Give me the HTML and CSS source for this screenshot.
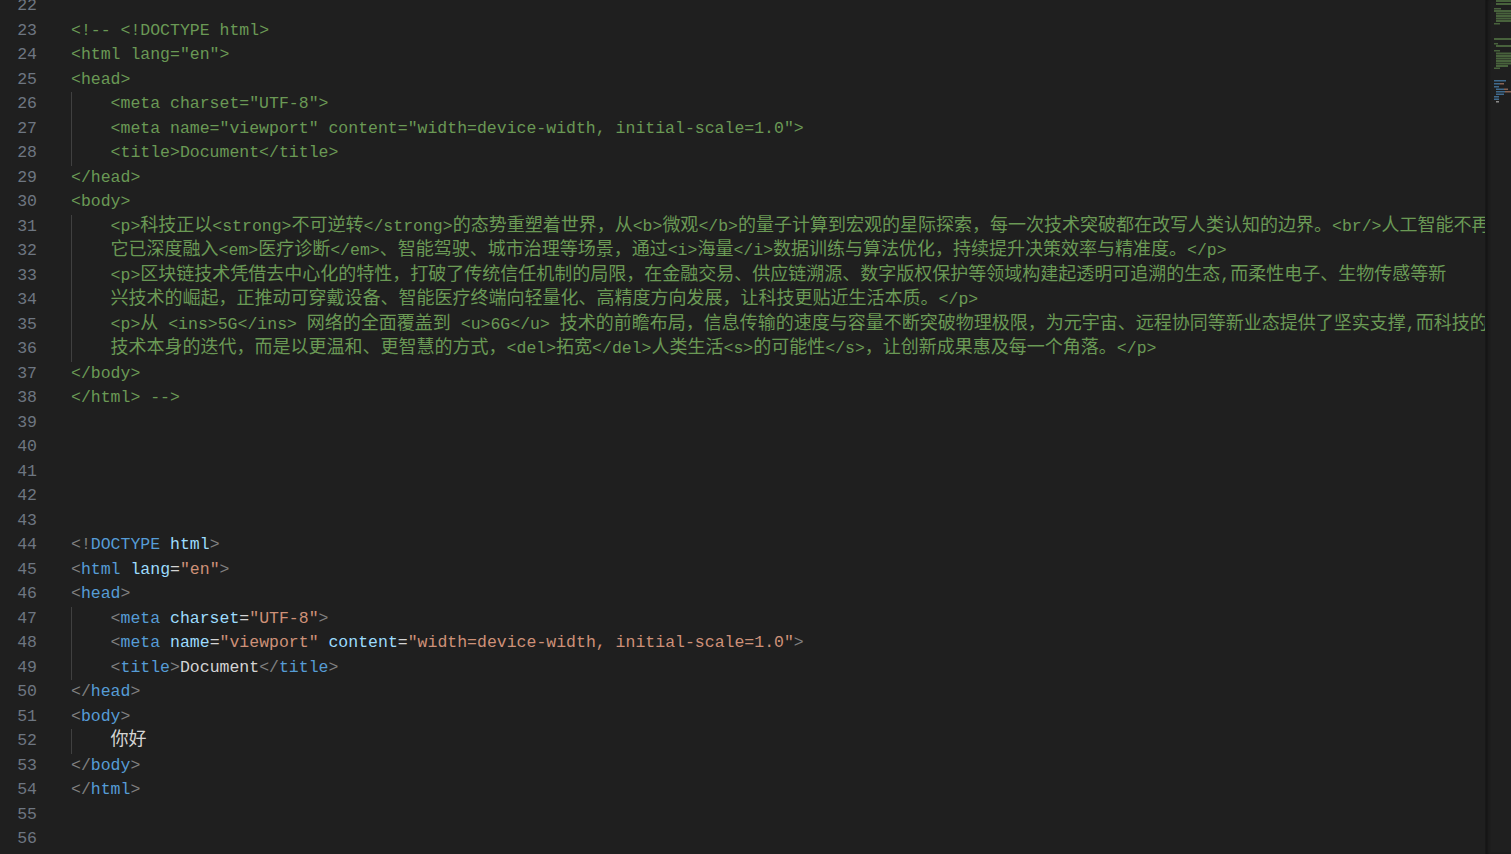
FILE: index.html
```html
<!DOCTYPE html>
<html lang="zh">
<head>
<meta charset="UTF-8">
<title>Editor</title>
<link rel="stylesheet" href="styles.css">
</head>
<body>
<div class="editor">
  <div class="lines">
    <div class="scroll">
      <div class="row"><span class="ln">22</span><span class="src"></span></div>
      <div class="row"><span class="ln">23</span><span class="src c">&lt;!-- &lt;!DOCTYPE html&gt;</span></div>
      <div class="row"><span class="ln">24</span><span class="src c">&lt;html lang="en"&gt;</span></div>
      <div class="row"><span class="ln">25</span><span class="src c">&lt;head&gt;</span></div>
      <div class="row"><span class="ln">26</span><span class="src c"><span class="ind"></span>&lt;meta charset="UTF-8"&gt;</span></div>
      <div class="row"><span class="ln">27</span><span class="src c"><span class="ind"></span>&lt;meta name="viewport" content="width=device-width, initial-scale=1.0"&gt;</span></div>
      <div class="row"><span class="ln">28</span><span class="src c"><span class="ind"></span>&lt;title&gt;Document&lt;/title&gt;</span></div>
      <div class="row"><span class="ln">29</span><span class="src c">&lt;/head&gt;</span></div>
      <div class="row"><span class="ln">30</span><span class="src c">&lt;body&gt;</span></div>
      <div class="row"><span class="ln">31</span><span class="src c"><span class="ind"></span>&lt;p&gt;<span class="k">科技正以</span>&lt;strong&gt;<span class="k">不可逆转</span>&lt;/strong&gt;<span class="k">的态势重塑着世界，从</span>&lt;b&gt;<span class="k">微观</span>&lt;/b&gt;<span class="k">的量子计算到宏观的星际探索，每一次技术突破都在改写人类认知的边界。</span>&lt;br/&gt;<span class="k">人工智能不再是实验室里的概念，</span></span></div>
      <div class="row"><span class="ln">32</span><span class="src c"><span class="ind"></span><span class="k">它已深度融入</span>&lt;em&gt;<span class="k">医疗诊断</span>&lt;/em&gt;<span class="k">、智能驾驶、城市治理等场景，通过</span>&lt;i&gt;<span class="k">海量</span>&lt;/i&gt;<span class="k">数据训练与算法优化，持续提升决策效率与精准度。</span>&lt;/p&gt;</span></div>
      <div class="row"><span class="ln">33</span><span class="src c"><span class="ind"></span>&lt;p&gt;<span class="k">区块链技术凭借去中心化的特性，打破了传统信任机制的局限，在金融交易、供应链溯源、数字版权保护等领域构建起透明可追溯的生态</span>,<span class="k">而柔性电子、生物传感等新</span></span></div>
      <div class="row"><span class="ln">34</span><span class="src c"><span class="ind"></span><span class="k">兴技术的崛起，正推动可穿戴设备、智能医疗终端向轻量化、高精度方向发展，让科技更贴近生活本质。</span>&lt;/p&gt;</span></div>
      <div class="row"><span class="ln">35</span><span class="src c"><span class="ind"></span>&lt;p&gt;<span class="k">从</span> &lt;ins&gt;5G&lt;/ins&gt; <span class="k">网络的全面覆盖到</span> &lt;u&gt;6G&lt;/u&gt; <span class="k">技术的前瞻布局，信息传输的速度与容量不断突破物理极限，为元宇宙、远程协同等新业态提供了坚实支撑</span>,<span class="k">而科技的意义不仅在于</span></span></div>
      <div class="row"><span class="ln">36</span><span class="src c"><span class="ind"></span><span class="k">技术本身的迭代，而是以更温和、更智慧的方式，</span>&lt;del&gt;<span class="k">拓宽</span>&lt;/del&gt;<span class="k">人类生活</span>&lt;s&gt;<span class="k">的可能性</span>&lt;/s&gt;<span class="k">，让创新成果惠及每一个角落。</span>&lt;/p&gt;</span></div>
      <div class="row"><span class="ln">37</span><span class="src c">&lt;/body&gt;</span></div>
      <div class="row"><span class="ln">38</span><span class="src c">&lt;/html&gt; --&gt;</span></div>
      <div class="row"><span class="ln">39</span><span class="src"></span></div>
      <div class="row"><span class="ln">40</span><span class="src"></span></div>
      <div class="row"><span class="ln">41</span><span class="src"></span></div>
      <div class="row"><span class="ln">42</span><span class="src"></span></div>
      <div class="row"><span class="ln">43</span><span class="src"></span></div>
      <div class="row"><span class="ln">44</span><span class="src"><span class="p">&lt;!</span><span class="t">DOCTYPE</span> <span class="a">html</span><span class="p">&gt;</span></span></div>
      <div class="row"><span class="ln">45</span><span class="src"><span class="p">&lt;</span><span class="t">html</span> <span class="a">lang</span><span class="x">=</span><span class="v">"en"</span><span class="p">&gt;</span></span></div>
      <div class="row"><span class="ln">46</span><span class="src"><span class="p">&lt;</span><span class="t">head</span><span class="p">&gt;</span></span></div>
      <div class="row"><span class="ln">47</span><span class="src"><span class="ind"></span><span class="p">&lt;</span><span class="t">meta</span> <span class="a">charset</span><span class="x">=</span><span class="v">"UTF-8"</span><span class="p">&gt;</span></span></div>
      <div class="row"><span class="ln">48</span><span class="src"><span class="ind"></span><span class="p">&lt;</span><span class="t">meta</span> <span class="a">name</span><span class="x">=</span><span class="v">"viewport"</span> <span class="a">content</span><span class="x">=</span><span class="v">"width=device-width, initial-scale=1.0"</span><span class="p">&gt;</span></span></div>
      <div class="row"><span class="ln">49</span><span class="src"><span class="ind"></span><span class="p">&lt;</span><span class="t">title</span><span class="p">&gt;</span><span class="x">Document</span><span class="p">&lt;/</span><span class="t">title</span><span class="p">&gt;</span></span></div>
      <div class="row"><span class="ln">50</span><span class="src"><span class="p">&lt;/</span><span class="t">head</span><span class="p">&gt;</span></span></div>
      <div class="row"><span class="ln">51</span><span class="src"><span class="p">&lt;</span><span class="t">body</span><span class="p">&gt;</span></span></div>
      <div class="row"><span class="ln">52</span><span class="src"><span class="ind"></span><span class="x k">你好</span></span></div>
      <div class="row"><span class="ln">53</span><span class="src"><span class="p">&lt;/</span><span class="t">body</span><span class="p">&gt;</span></span></div>
      <div class="row"><span class="ln">54</span><span class="src"><span class="p">&lt;/</span><span class="t">html</span><span class="p">&gt;</span></span></div>
      <div class="row"><span class="ln">55</span><span class="src"></span></div>
      <div class="row"><span class="ln">56</span><span class="src"></span></div>
    </div>
  </div>
  <div class="minimap">
    <svg width="26" height="854" viewBox="0 0 26 854" xmlns="http://www.w3.org/2000/svg">
      <g fill="#6a9955" opacity="0.55">
        <rect x="10" y="0" width="16" height="2"/>
        <rect x="10" y="3" width="16" height="2"/>
        <rect x="8" y="8" width="7" height="1.5"/>
        <rect x="8" y="10" width="18" height="2"/>
        <rect x="10" y="12.5" width="16" height="2"/>
        <rect x="10" y="15" width="16" height="2"/>
        <rect x="10" y="17.5" width="16" height="2"/>
        <rect x="10" y="20" width="16" height="2"/>
        <rect x="8" y="23" width="6" height="1.5"/>
        <rect x="8" y="38" width="18" height="2"/>
        <rect x="8" y="43" width="4" height="1.5"/>
        <rect x="10" y="45" width="16" height="2"/>
        <rect x="8" y="50" width="6" height="1.5"/>
        <rect x="10" y="52.5" width="16" height="2"/>
        <rect x="10" y="55" width="16" height="2"/>
        <rect x="10" y="57.5" width="16" height="2"/>
        <rect x="10" y="60" width="16" height="2"/>
        <rect x="10" y="62.5" width="16" height="2"/>
        <rect x="10" y="65" width="12" height="2"/>
        <rect x="8" y="67.5" width="6" height="1.5"/>
      </g>
      <g opacity="0.6">
        <rect x="8" y="80" width="12" height="1.5" fill="#569cd6"/>
        <rect x="8" y="83" width="6" height="1.5" fill="#569cd6"/>
        <rect x="14" y="83" width="4" height="1.5" fill="#ce9178"/>
        <rect x="8" y="86" width="5" height="1.5" fill="#569cd6"/>
        <rect x="10" y="88.5" width="8" height="1.5" fill="#569cd6"/>
        <rect x="18" y="88.5" width="4" height="1.5" fill="#ce9178"/>
        <rect x="10" y="91" width="9" height="1.5" fill="#569cd6"/>
        <rect x="19" y="91" width="7" height="1.5" fill="#ce9178"/>
        <rect x="10" y="93.5" width="8" height="1.5" fill="#569cd6"/>
        <rect x="8" y="96" width="5" height="1.5" fill="#569cd6"/>
        <rect x="8" y="98.5" width="5" height="1.5" fill="#569cd6"/>
        <rect x="10" y="101" width="3" height="1.5" fill="#d4d4d4"/>
      </g>
    </svg>
  </div>
</div>
</body>
</html>
```
FILE: styles.css
```css
html, body {
  margin: 0;
  padding: 0;
  background: #1f1f1f;
  overflow: hidden;
}

.editor {
  display: flex;
  width: 1511px;
  height: 854px;
  background: #1f1f1f;
  overflow: hidden;
}

.lines {
  flex: 1;
  overflow: hidden;
  font-family: "Liberation Mono", "DejaVu Sans Mono", monospace;
  font-size: 16.5px;
  color: #d4d4d4;
}

.scroll {
  margin-top: -5.75px;
}

.row {
  display: flex;
  height: 24.5px;
  line-height: 24.5px;
  white-space: pre;
}

.ln {
  flex: none;
  width: 37px;
  text-align: right;
  color: #6e7681;
}

.src {
  flex: 1;
  margin-left: 34px;
  overflow: hidden;
  white-space: pre;
}

.ind {
  display: inline-block;
  width: 39.6px;
  height: 24.5px;
  vertical-align: top;
  box-sizing: border-box;
  border-left: 1px solid #404040;
}

.k {
  font-family: "Noto Sans CJK SC", "Noto Sans CJK JP", sans-serif;
  font-size: 18px;
  line-height: 16px;
}

.c { color: #6a9955; }
.p { color: #808080; }
.t { color: #569cd6; }
.a { color: #9cdcfe; }
.v { color: #ce9178; }
.x { color: #d4d4d4; }

.minimap {
  flex: none;
  width: 26px;
  height: 854px;
  background: #1f1f1f;
  box-shadow: inset 3px 0 3px -1px #141414;
  border-left: 1px solid #181818;
  box-sizing: border-box;
}

.minimap svg {
  display: block;
}
```
